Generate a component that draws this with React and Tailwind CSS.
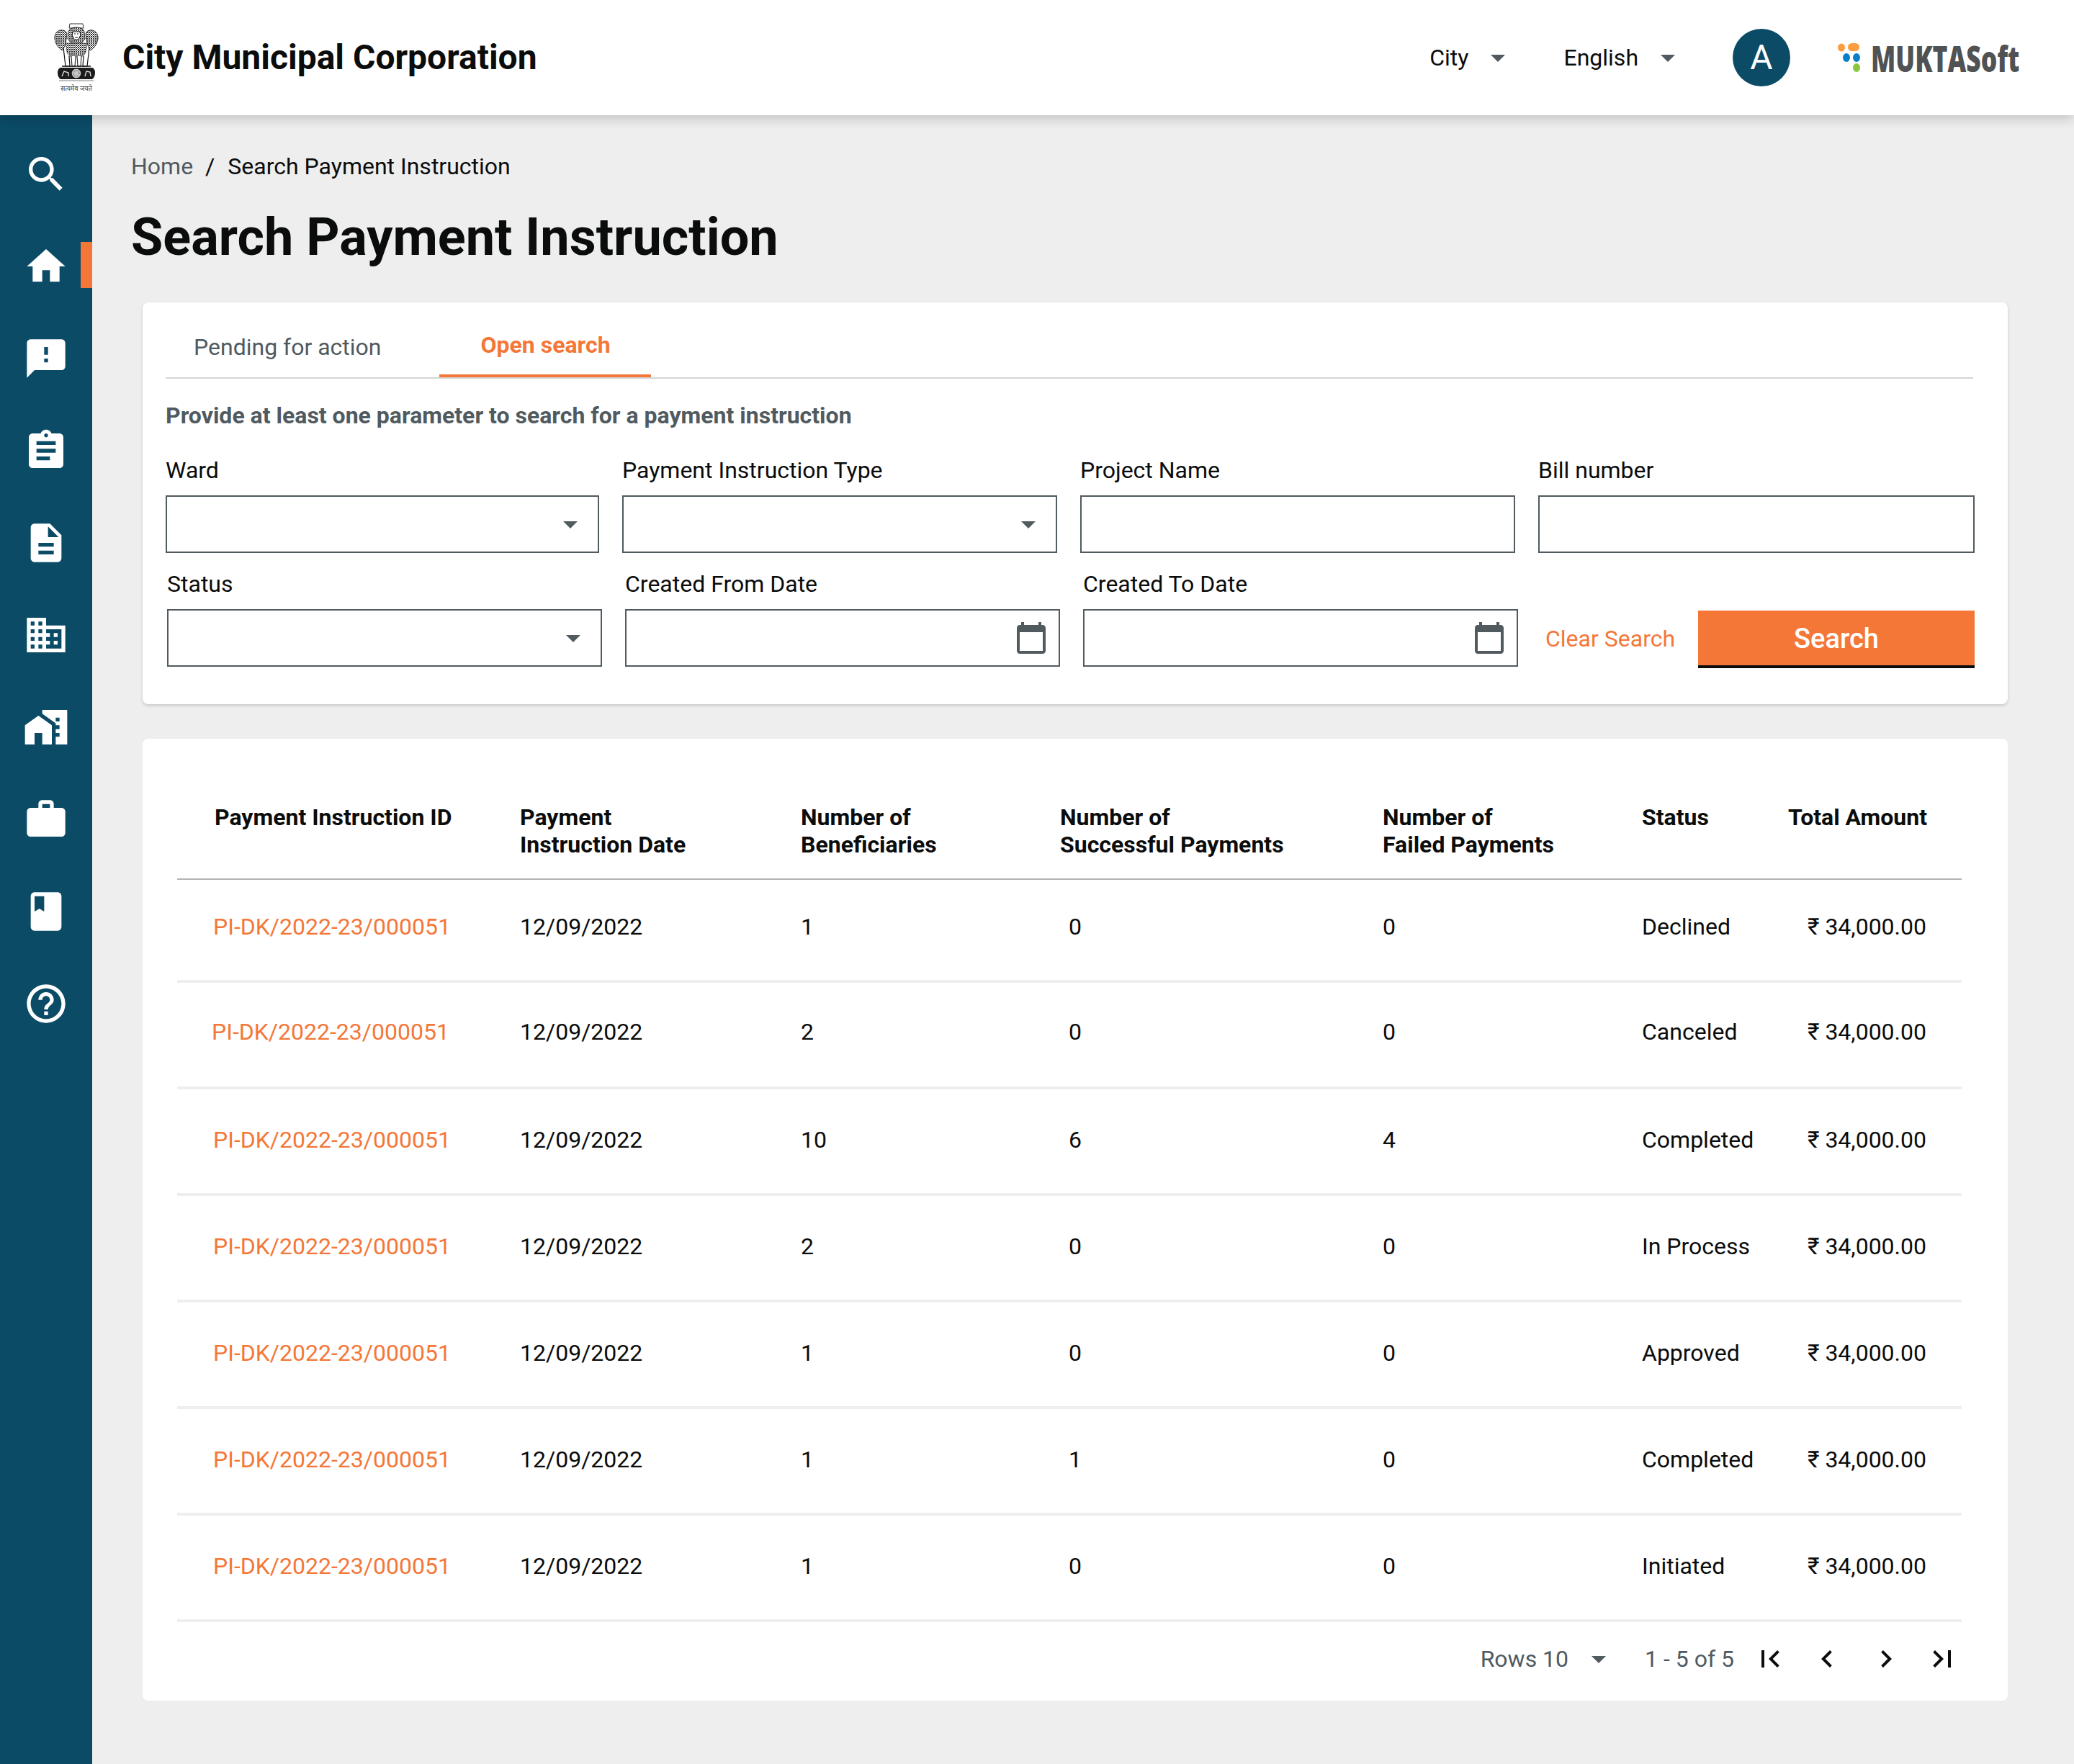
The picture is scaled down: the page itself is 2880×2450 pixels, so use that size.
import React from "react";
import {
  MdSearch, MdHome, MdFeedback, MdAssignment, MdDescription, MdDomain, MdMapsHomeWork, MdWork, MdBook, MdHelpOutline,
  MdArrowDropDown, MdCalendarToday, MdFirstPage, MdLastPage, MdChevronLeft, MdChevronRight,
} from "react-icons/md";

const navIcons = [MdSearch, MdHome, MdFeedback, MdAssignment, MdDescription, MdDomain, MdMapsHomeWork, MdWork, MdBook, MdHelpOutline];

const rows = [
  { pad: "pl-[50px]", up: "-top-[5px]", ben: "1", ok: "0", fail: "0", status: "Declined" },
  { pad: "pl-[48px]", up: "-top-[4px]", ben: "2", ok: "0", fail: "0", status: "Canceled" },
  { pad: "pl-[50px]", up: "-top-[2px]", ben: "10", ok: "6", fail: "4", status: "Completed" },
  { pad: "pl-[50px]", up: "-top-[2px]", ben: "2", ok: "0", fail: "0", status: "In Process" },
  { pad: "pl-[50px]", up: "-top-[2px]", ben: "1", ok: "0", fail: "0", status: "Approved" },
  { pad: "pl-[50px]", up: "-top-[2px]", ben: "1", ok: "1", fail: "0", status: "Completed" },
  { pad: "pl-[50px]", up: "-top-[2px]", ben: "1", ok: "0", fail: "0", status: "Initiated" },
];

function Emblem() {
  return (
    <svg width="62" height="96" viewBox="0 0 62 96" className="block">
      <defs>
        <pattern id="spk" width="3" height="3" patternUnits="userSpaceOnUse">
          <rect width="3" height="3" fill="#fff" />
          <circle cx="1" cy="1" r="1.1" fill="#1a1a1a" />
          <circle cx="2.5" cy="2.5" r="0.5" fill="#1a1a1a" />
        </pattern>
      </defs>
      <path d="M22 1h18l1 6H21z" fill="#fff" stroke="#333" strokeWidth="1" />
      <path d="M1 22c-1-8 5-13 11-12 3 0 5 2 6 5l-2 14-4 9c-6-3-10-9-11-16z" fill="url(#spk)" stroke="#111" strokeWidth="0.8" />
      <path d="M61 22c1-8-5-13-11-12-3 0-5 2-6 5l2 14 4 9c6-3 10-9 11-16z" fill="url(#spk)" stroke="#111" strokeWidth="0.8" />
      <path d="M20 12c1-4 6-6 11-6s10 2 11 6l1 10-5 6H24l-5-6z" fill="url(#spk)" stroke="#111" strokeWidth="0.8" />
      <path d="M26 12h10l1 5-3 6h-6l-3-6z" fill="#fff" stroke="#111" strokeWidth="1.2" />
      <path d="M28 15h2M32 15h2M29 20h4" stroke="#111" strokeWidth="1.2" />
      <path d="M16 28h30l-3 18H19z" fill="url(#spk)" stroke="#111" strokeWidth="0.6" />
      <path d="M13 34l3 26h6l-1-14M49 34l-3 26h-6l1-14" fill="#fff" stroke="#111" strokeWidth="1.2" />
      <path d="M24 46l1 14h4l1-14M32 46l1 14h4l1-14" fill="#fff" stroke="#222" strokeWidth="1.1" />
      <path d="M11 60h40" stroke="#111" strokeWidth="1.6" />
      <path d="M9 62h44c3 1 4 4 4 7s-1 7-4 9H9c-3-2-4-6-4-9s1-6 4-7z" fill="#1c1c1c" />
      <circle cx="31" cy="70" r="7" fill="#c8c8c8" stroke="#111" strokeWidth="1.2" />
      <circle cx="31" cy="70" r="4" fill="none" stroke="#333" strokeWidth="1" strokeDasharray="1 1" />
      <path d="M11 74l3-7 6 2 0 5M43 74l2-7 5 1 1 6" stroke="#ddd" strokeWidth="1.4" fill="none" />
      <path d="M7 80h48" stroke="#aaa" strokeWidth="1.5" />
      <text x="31" y="94" textAnchor="middle" fontSize="9" fill="#333" fontFamily="'Noto Sans', 'DejaVu Sans', sans-serif">सत्यमेव जयते</text>
    </svg>
  );
}

function MuktaLogo() {
  return (
    <div className="flex items-center h-[44px]">
      <svg width="40" height="44" viewBox="0 0 40 44" className="shrink-0">
        <ellipse cx="5" cy="8" rx="5" ry="5.5" fill="#fb9c41" />
        <rect x="14" y="2" width="16" height="11" rx="5.5" fill="#fb9c41" />
        <ellipse cx="12" cy="22" rx="5" ry="6" fill="#0d7fc8" />
        <ellipse cx="26" cy="22" rx="5" ry="6" fill="#0d7fc8" />
        <ellipse cx="26" cy="36" rx="5" ry="6" fill="#8cc63f" />
      </svg>
      <span className="ml-[6px] block w-[205px] pt-[2px] text-[50px] leading-[44px] font-extrabold text-[#505254] origin-left scale-x-[0.71] whitespace-nowrap font-['Open_Sans',sans-serif]">MUKTASoft</span>
    </div>
  );
}

function Field({ label, width, kind }) {
  return (
    <div className={`flex flex-col ${width}`}>
      <label className="h-[40px] leading-[40px] text-[#0b0c0c] whitespace-nowrap">{label}</label>
      <div className="mt-[15px] h-[80px] border-2 border-[#505a5f] bg-white flex items-center justify-end pr-[14px]">
        {kind === "select" && <MdArrowDropDown className="w-[48px] h-[48px] text-[#505a5f]" />}
        {kind === "date" && <MdCalendarToday className="w-[48px] h-[48px] text-[#505a5f]" />}
      </div>
    </div>
  );
}

export default function App() {
  return (
    <div className="w-[2880px] h-[2450px] flex flex-col bg-[#eeeeee] overflow-hidden text-[32px] text-[#0b0c0c] font-['Roboto',sans-serif]">
      <header className="relative z-10 h-[160px] shrink-0 bg-white flex items-center shadow-[0_4px_16px_rgba(0,0,0,0.2)]">
        <div className="ml-[75px] w-[62px]"><Emblem /></div>
        <h2 className="ml-[33px] text-[48px] leading-[56px] font-bold whitespace-nowrap">City Municipal Corporation</h2>
        <div className="ml-auto flex items-center pr-[77px]">
          <span>City</span>
          <MdArrowDropDown className="ml-[17px] w-[48px] h-[48px] text-[#505a5f]" />
          <span className="ml-[67px]">English</span>
          <MdArrowDropDown className="ml-[17px] w-[48px] h-[48px] text-[#505a5f]" />
          <div className="ml-[66px] w-[80px] h-[80px] rounded-full bg-[#0b4b66] text-white text-[48px] flex items-center justify-center">A</div>
          <div className="ml-[66px]"><MuktaLogo /></div>
        </div>
      </header>
      <div className="flex flex-1 min-h-0">
        <nav className="w-[128px] shrink-0 bg-[#0b4b66] pt-[18px] flex flex-col">
          {navIcons.map((Icon, i) => (
            <div key={i} className="relative h-[128px] flex items-center justify-center">
              <Icon className="w-[64px] h-[64px] text-white" />
              {i === 1 && <span className="absolute right-0 top-[30px] w-[16px] h-[64px] bg-[#f47738]" />}
            </div>
          ))}
        </nav>
        <main className="flex-1 pt-[51px]">
          <div className="ml-[54px] flex items-center h-[40px] leading-[40px]">
            <span className="text-[#505a5f]">Home</span>
            <span className="ml-[17px] mr-[18px]">/</span>
            <span>Search Payment Instruction</span>
          </div>
          <h1 className="ml-[54px] mt-[35px] h-[88px] text-[72px] leading-[88px] font-bold whitespace-nowrap">Search Payment Instruction</h1>

          <section className="ml-[70px] mt-[46px] w-[2590px] h-[558px] bg-white rounded-[8px] shadow-[0_2px_4px_rgba(0,0,0,0.16)] pl-[32px]">
            <div className="w-[2510px] h-[106px] border-b-2 border-[#d6d5d4] flex">
              <div className="w-[380px] h-[104px] pl-[39px] pt-[20px] flex items-center text-[#505a5f]">Pending for action</div>
              <div className="w-[294px] h-[104px] pt-[18px] pl-[1px] border-b-4 border-[#f47738] flex items-center justify-center text-[#f47738] font-bold">Open search</div>
            </div>
            <p className="mt-[31px] h-[40px] leading-[40px] font-bold text-[#505a5f]">Provide at least one parameter to search for a payment instruction</p>
            <div className="mt-[36px] flex gap-[32px]">
              <Field label="Ward" width="w-[602px]" kind="select" />
              <Field label="Payment Instruction Type" width="w-[604px]" kind="select" />
              <Field label="Project Name" width="w-[604px]" />
              <Field label="Bill number" width="w-[606px]" />
            </div>
            <div className="mt-[23px] ml-[2px] flex gap-[32px] items-end">
              <Field label="Status" width="w-[604px]" kind="select" />
              <Field label="Created From Date" width="w-[604px]" kind="date" />
              <Field label="Created To Date" width="w-[604px]" kind="date" />
              <div className="h-[80px] ml-[6px] pt-[2px] w-[180px] flex items-center text-[#f47738] whitespace-nowrap">Clear Search</div>
              <button className="-mb-[2px] w-[384px] h-[80px] bg-[#f47738] border-b-4 border-[#0b0c0c] text-white text-[38px] leading-[44px] font-medium pt-[2px]">Search</button>
            </div>
          </section>

          <section className="ml-[70px] mt-[48px] w-[2590px] h-[1336px] bg-white rounded-[8px] pt-[90px] pl-[48px]">
            <table className="table-fixed w-[2478px] border-collapse">
              <colgroup>
                <col className="w-[476px]" /><col className="w-[390px]" /><col className="w-[360px]" /><col className="w-[448px]" /><col className="w-[360px]" /><col className="w-[203px]" /><col className="w-[241px]" />
              </colgroup>
              <thead>
                <tr className="border-b-2 border-[#b1b4b6] text-left leading-[38px] align-top">
                  <th className="pl-[52px] pb-[28px] font-bold whitespace-nowrap">Payment Instruction ID</th>
                  <th className="pb-[28px] font-bold">Payment<br />Instruction Date</th>
                  <th className="pb-[28px] font-bold">Number of<br />Beneficiaries</th>
                  <th className="pb-[28px] font-bold">Number of<br />Successful Payments</th>
                  <th className="pb-[28px] font-bold">Number of<br />Failed Payments</th>
                  <th className="pb-[28px] font-bold">Status</th>
                  <th className="pb-[28px] pr-[48px] text-right font-bold whitespace-nowrap">Total Amount</th>
                </tr>
              </thead>
              <tbody>
                {rows.map((r, i) => (
                  <tr key={i} className={`border-b-4 border-[#eeeeee] ${i === 0 ? "h-[142px]" : "h-[148px]"}`}>
                    <td className={`${r.pad} text-[#f47738] whitespace-nowrap`}><span className={`relative ${r.up}`}>PI-DK/2022-23/000051</span></td>
                    <td><span className={`relative ${r.up}`}>12/09/2022</span></td>
                    <td><span className={`relative ${r.up}`}>{r.ben}</span></td>
                    <td className="pl-[12px]"><span className={`relative ${r.up}`}>{r.ok}</span></td>
                    <td><span className={`relative ${r.up}`}>{r.fail}</span></td>
                    <td className="whitespace-nowrap"><span className={`relative ${r.up}`}>{r.status}</span></td>
                    <td className="pr-[49px] text-right whitespace-nowrap"><span className={`relative ${r.up}`}>₹ 34,000.00</span></td>
                  </tr>
                ))}
              </tbody>
            </table>
            <div className="w-[2478px] h-[102px] flex items-center justify-end pr-[3px]">
              <span className="text-[#505a5f] whitespace-nowrap">Rows 10</span>
              <MdArrowDropDown className="ml-[18px] w-[48px] h-[48px] text-[#505a5f]" />
              <span className="ml-[40px] text-[#505a5f] whitespace-nowrap">1 - 5 of 5</span>
              <MdFirstPage className="ml-[26px] w-[48px] h-[48px] text-[#0b0c0c]" />
              <MdChevronLeft className="ml-[31px] w-[48px] h-[48px] text-[#0b0c0c]" />
              <MdChevronRight className="ml-[34px] w-[48px] h-[48px] text-[#0b0c0c]" />
              <MdLastPage className="ml-[30px] w-[48px] h-[48px] text-[#0b0c0c]" />
            </div>
          </section>
        </main>
      </div>
    </div>
  );
}
